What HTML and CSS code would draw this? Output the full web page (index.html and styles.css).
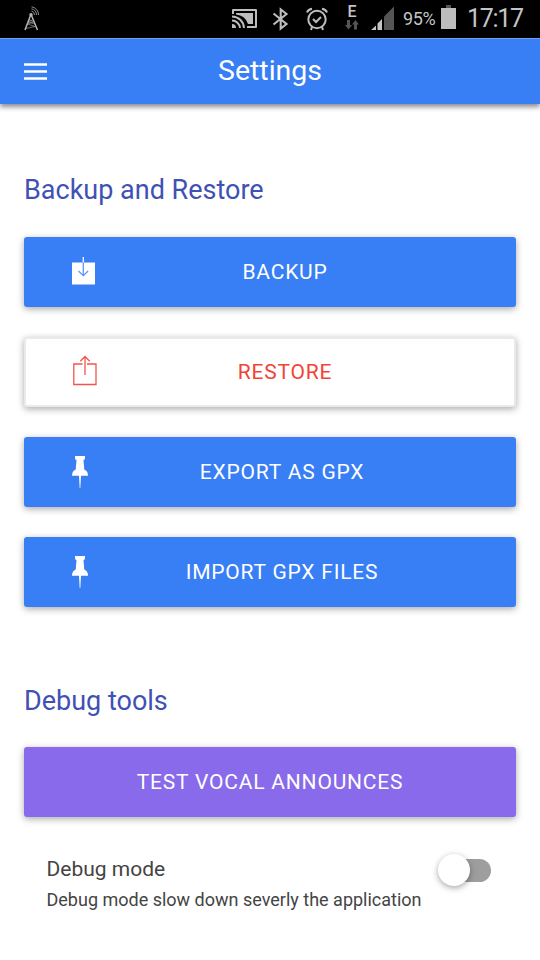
FILE: index.html
```html
<!DOCTYPE html>
<html lang="en">
<head>
<meta charset="utf-8">
<title>Settings</title>
<link rel="stylesheet" href="styles.css">
</head>
<body>
<div class="status">
  <svg class="antenna" width="18" height="26" viewBox="0 0 18 26" fill="none" stroke="#b5b5b5">
    <path d="M6.700 9 1 24M7.300 9 13.500 24" stroke-width="1.500"/>
    <path d="M5 13.500 9.300 16 3.500 18 11 20.500 2 22.500M9 13.500 4.500 16 10.500 18" stroke-width=".6"/>
    <circle cx="7" cy="8.800" r="1.700" fill="#b5b5b5" stroke="none"/>
    <path d="M7.500 5A4 4 0 0 1 10.500 9M7.500 2.800A6 6 0 0 1 12.500 9M7.500 .8A8 8 0 0 1 14.500 9" stroke="#8c8c8c" stroke-width="1"/>
  </svg>
  <svg class="cast" width="26" height="20" viewBox="0 0 26 20">
    <path d="M1 5V1h23v17h-9" fill="none" stroke="#bdbdbd" stroke-width="2" stroke-linejoin="round"/>
    <path d="M4 4h17v11h-5A14 14 0 0 0 4 5.500z" fill="#bdbdbd"/>
    <path d="M0 7.500A12 12 0 0 1 12 19M0 11.500A8 8 0 0 1 8 19" fill="none" stroke="#bdbdbd" stroke-width="2"/>
    <path d="M0 15a4 4 0 0 1 4 4H0z" fill="#bdbdbd"/>
  </svg>
  <svg class="bluetooth" width="18" height="24" viewBox="0 0 18 24" fill="none" stroke="#bdbdbd" stroke-width="2.100">
    <path d="M1.500 6.500 14.500 17 8.700 21.500V2.500L14.500 7 1.500 17.500"/>
  </svg>
  <svg class="alarm" width="22" height="24" viewBox="0 0 22 24" fill="none" stroke="#bdbdbd" stroke-width="2">
    <circle cx="11" cy="12.500" r="8.700"/>
    <path d="M7 12 10 15 15 10"/>
    <path d="M1 5.500Q2 2.500 6 1.700M21 5.500Q20 2.500 16 1.700M6 20 5 23M16 20 17 23"/>
  </svg>
  <div class="network">
    <span>E</span>
    <svg width="14" height="10" viewBox="0 0 14 10" fill="#555"><path d="M2 0h3v5h2l-3.500 4.500L0 5h2zM9 9.500h3v-5h2L10.500 0 7 4.500h2z"/></svg>
  </div>
  <svg class="signal" width="23" height="24" viewBox="0 0 23 24">
    <path d="M0 24 5 19.500V24zM6.500 24V17.500L11 13V24z" fill="#c4c4c4"/>
    <path d="M13 24V10.500L23 .5V24z" fill="#555"/>
  </svg>
  <span class="percent">95%</span>
  <svg class="battery" width="15" height="24" viewBox="0 0 15 24"><path d="M5 0h5v3H5z" fill="#555"/><path d="M0 3h15v21H0z" fill="#bdbdbd"/></svg>
  <span class="clock">17:17</span>
</div>
<header class="bar">
  <svg class="menu" width="23" height="17" viewBox="0 0 23 17" fill="#fff"><path d="M0 .2h23v2.500H0zM0 7.300h23v2.500H0zM0 14.300h23v2.500H0z"/></svg>
  <h1>Settings</h1>
</header>
<main>
  <section class="backup">
    <h2>Backup and Restore</h2>
    <button class="btn primary"><svg class="box" width="24" height="29" viewBox="0 0 24 29">
      <path d="M0 5.500h23V27.500H0z" fill="#fff"/><path d="M11.300 0v5.500" stroke="#fff" stroke-width="1.300"/><path d="M11.300 5.500V18.500M6.500 14l4.800 4.700 4.800-4.700" fill="none" stroke="#5b98f8" stroke-width="1.300"/>
    </svg><span>BACKUP</span></button>
    <button class="btn outline"><svg class="box share" width="26" height="31" viewBox="0 0 26 31" fill="none" stroke="#f2564b" stroke-width="1.300">
      <path d="M10.500 9H1.800V29.500H24V9H15M13 20V1.500M8.300 6.200 13 1.500l4.700 4.700"/>
    </svg><span>RESTORE</span></button>
    <button class="btn primary"><svg class="pin" width="16" height="32" viewBox="0 0 16 32" fill="#fff">
      <path d="M3 0h10v3l-1.500 1.200.8 9.300Q16 15 16 19.700H9L8.300 32.500H7.700L7 19.700H0Q0 15 3.700 13.500L4.500 4.200 3 3z"/>
    </svg><span>EXPORT AS GPX</span></button>
    <button class="btn primary"><svg class="pin" width="16" height="32" viewBox="0 0 16 32" fill="#fff">
      <path d="M3 0h10v3l-1.500 1.200.8 9.300Q16 15 16 19.700H9L8.300 32.500H7.700L7 19.700H0Q0 15 3.700 13.500L4.500 4.200 3 3z"/>
    </svg><span>IMPORT GPX FILES</span></button>
  </section>
  <section class="debug">
    <h2>Debug tools</h2>
    <button class="btn royal"><span>TEST VOCAL ANNOUNCES</span></button>
    <div class="item">
      <div>
        <h3>Debug mode</h3>
        <p>Debug mode slow down severly the application</p>
      </div>
      <div class="toggle"><div class="knob"></div></div>
    </div>
  </section>
</main>
</body>
</html>
```
FILE: styles.css
```css
* { box-sizing: border-box; }
body {
  margin: 0;
  height: 960px;
  overflow: hidden;
  background: #fff;
  font-family: Roboto, sans-serif;
}
h1, h2, h3, p { margin: 0; font-weight: 400; white-space: nowrap; }
svg { display: block; flex: none; }

.status {
  display: flex;
  align-items: flex-start;
  height: 38px;
  background: #000;
  color: #c4c4c4;
}
.antenna { margin: 6px 0 0 24px; }
.cast { margin: 9px 0 0 190px; }
.bluetooth { margin: 7px 0 0 14px; }
.alarm { margin: 7px 0 0 16px; }
.network { width: 14px; margin: 3px 0 0 17px; text-align: center; }
.network span { display: block; font-size: 16px; line-height: 17px; font-weight: 500; }
.signal { margin: 6px 0 0 12px; }
.percent { width: 38px; margin-left: 9px; font-size: 18px; line-height: 38px; white-space: nowrap; letter-spacing: -.4px; }
.battery { margin: 5px 0 0 0; }
.clock { margin-left: 11px; font-size: 25px; line-height: 38px; white-space: nowrap; letter-spacing: -1.3px; }

.bar {
  display: grid;
  grid-template-columns: 150px 1fr 150px;
  align-items: center;
  height: 66px;
  background: #387ef5;
  border-top: 1px solid #6b9ff7;
  color: #fff;
  box-shadow: 0 3px 5px rgba(0, 0, 0, .45);
}
.menu { margin: 0 0 0 24px; }
.bar h1 { padding-bottom: 1px; font-size: 28.500px; line-height: 62px; text-align: center; }

main { padding: 0 24px; }
.backup { padding-top: 69px; }
.debug { padding-top: 45.800px; }
h2 { margin-bottom: 29.600px; font-size: 27px; line-height: 34px; color: #3f51b5; }

.btn {
  display: flex;
  align-items: center;
  width: 100%;
  height: 70px;
  margin: 0 0 30.300px;
  padding: 0 48px;
  border: 0;
  border-radius: 3px;
  color: #fff;
  font: 400 21px/70px Roboto, sans-serif;
  letter-spacing: .8px;
  box-shadow: 0 2px 7px rgba(0, 0, 0, .34);
}
.btn span { flex: 1; text-align: center; white-space: nowrap; }
.box { margin-right: 6px; }
.share { margin: 0 4px 2px 0; }
.pin { margin-right: 8px; }
.primary { background: #387ef5; }
.outline { background: #fff; color: #f44336; border: 2px solid #eaeaea; padding: 0 46px; }
.royal { background: #886aea; }

.item { display: flex; justify-content: space-between; padding: 5.500px 25px 0 22.500px; color: #444; }
h3 { font-size: 21px; line-height: 32px; }
.item p { font-size: 18px; line-height: 30px; }
.toggle { position: relative; width: 50px; height: 23px; margin-top: 6px; border-radius: 12px; background: #9e9e9e; }
.knob {
  position: absolute;
  left: -3px;
  top: -5px;
  width: 32px;
  height: 32px;
  border-radius: 50%;
  background: #fff;
  box-shadow: 0 2px 6px rgba(0, 0, 0, .35);
}
```
